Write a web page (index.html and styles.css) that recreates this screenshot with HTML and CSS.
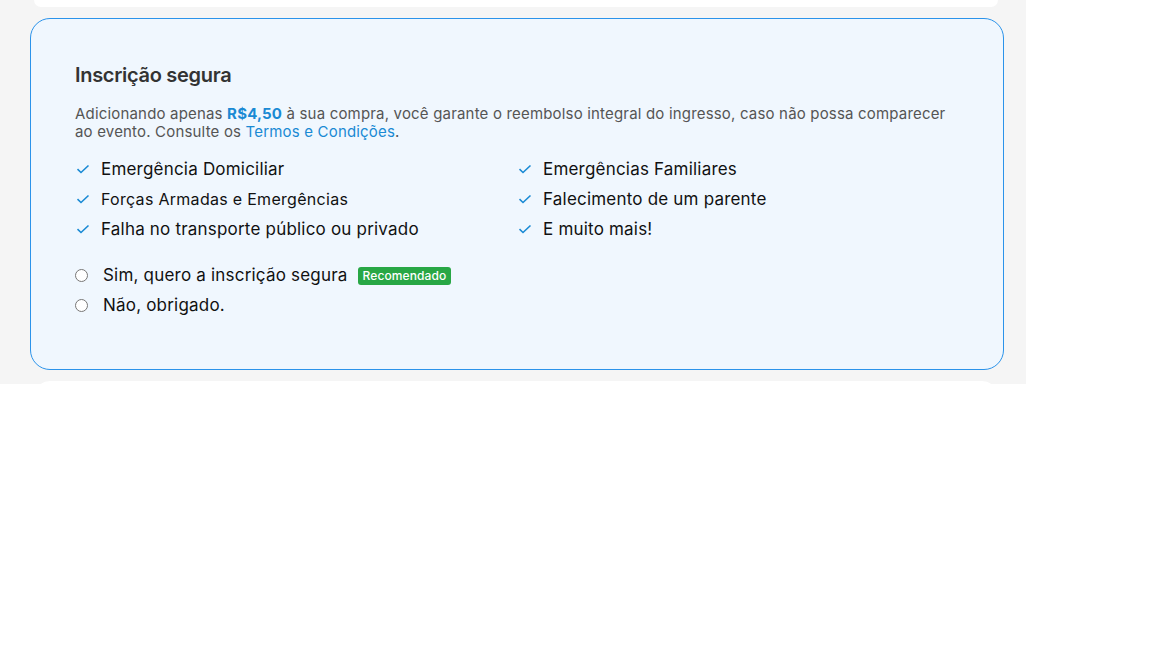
FILE: index.html
```html
<!DOCTYPE html>
<html lang="pt-BR">
<head>
    <meta charset="UTF-8">
    <meta name="viewport" content="width=device-width, initial-scale=1.0">
    <title>Inscrição segura</title>
    <link rel="stylesheet" href="styles.css">
</head>
<body>
    <div class="checkout">
        <div class="card card-top"></div>

        <section class="insurance">
            <h2 class="insurance-title">Inscrição segura</h2>
            <p class="insurance-text">Adicionando apenas <strong class="price">R$4,50</strong> à sua compra, você garante o reembolso integral do ingresso, caso não possa comparecer ao evento. Consulte os <a href="#" class="terms">Termos e Condições</a>.</p>

            <!-- Coverage list -->
            <ul class="coverage">
                <li><svg class="check" viewBox="0 0 14 10"><path d="M1.5 5.2 L5 8.5 L12.5 1.5"/></svg>Emergência Domiciliar</li>
                <li><svg class="check" viewBox="0 0 14 10"><path d="M1.5 5.2 L5 8.5 L12.5 1.5"/></svg>Emergências Familiares</li>
                <li class="small"><svg class="check" viewBox="0 0 14 10"><path d="M1.5 5.2 L5 8.5 L12.5 1.5"/></svg>Forças Armadas e Emergências</li>
                <li><svg class="check" viewBox="0 0 14 10"><path d="M1.5 5.2 L5 8.5 L12.5 1.5"/></svg>Falecimento de um parente</li>
                <li><svg class="check" viewBox="0 0 14 10"><path d="M1.5 5.2 L5 8.5 L12.5 1.5"/></svg>Falha no transporte público ou privado</li>
                <li><svg class="check" viewBox="0 0 14 10"><path d="M1.5 5.2 L5 8.5 L12.5 1.5"/></svg>E muito mais!</li>
            </ul>

            <!-- Choice -->
            <div class="options">
                <label class="option">
                    <input type="radio" name="insurance">
                    <span>Sim, quero a inscrição segura</span>
                    <span class="badge">Recomendado</span>
                </label>
                <label class="option">
                    <input type="radio" name="insurance">
                    <span>Não, obrigado.</span>
                </label>
            </div>
        </section>

        <div class="card card-bottom"></div>
    </div>
</body>
</html>
```

FILE: styles.css
```css
body {
    margin: 0;
    background: #fff;
    font-family: Inter, "Noto Sans", Arial, sans-serif;
}

.checkout {
    width: 1026px;
    height: 384px;
    overflow: hidden;
    background-color: #f5f5f5;
    box-sizing: border-box;
    padding: 0 22px 0 30px;
    display: flex;
    flex-direction: column;
    gap: 11px;
}

.card {
    background: #fff;
    margin: 0 6px 0 4px;
    flex-shrink: 0;
}

.card-top {
    height: 7px;
    border-radius: 0 0 16px 16px;
}

.card-bottom {
    height: 40px;
    border-radius: 16px 16px 0 0;
}

.insurance {
    flex-shrink: 0;
    height: 352px;
    box-sizing: border-box;
    background-color: #f0f7fe;
    border: 1px solid #2b93ea;
    border-radius: 20px;
    padding: 43px 44px 0 44px;
}

.insurance-title {
    margin: 0;
    font-size: 20px;
    line-height: 26px;
    font-weight: 600;
    letter-spacing: -0.3px;
    color: #333;
}

.insurance-text {
    margin: 17px 0 0;
    font-size: 15px;
    line-height: 18px;
    letter-spacing: 0.18px;
    color: #555;
}

.price {
    color: #1a8ad4;
    font-weight: 700;
}

.terms {
    color: #1a8ad4;
    text-decoration: none;
}

.coverage {
    list-style: none;
    margin: 13px 0 0;
    padding: 0;
    display: grid;
    grid-template-columns: 1fr 1fr;
}

.coverage li {
    display: flex;
    align-items: center;
    height: 30px;
    font-size: 17px;
    letter-spacing: 0.2px;
    color: #111;
}

.coverage li.small {
    font-size: 16px;
    letter-spacing: 0.29px;
}

.check {
    width: 14px;
    height: 10px;
    margin: 0 11px 0 1px;
    fill: none;
    stroke: #1a8ad4;
    stroke-width: 1.6;
}

.options {
    margin-top: 16px;
    display: flex;
    flex-direction: column;
}

.option {
    display: flex;
    align-items: center;
    height: 30px;
    font-size: 17px;
    letter-spacing: 0.2px;
    color: #111;
}

.option input {
    width: 13px;
    height: 13px;
    margin: 0 15px 0 0;
}

.badge {
    margin: 2px 0 0 10px;
    background-color: #28a745;
    color: #fff;
    font-size: 12px;
    font-weight: 500;
    letter-spacing: 0.1px;
    line-height: 18px;
    padding: 0 5px;
    border-radius: 3px;
}
```
